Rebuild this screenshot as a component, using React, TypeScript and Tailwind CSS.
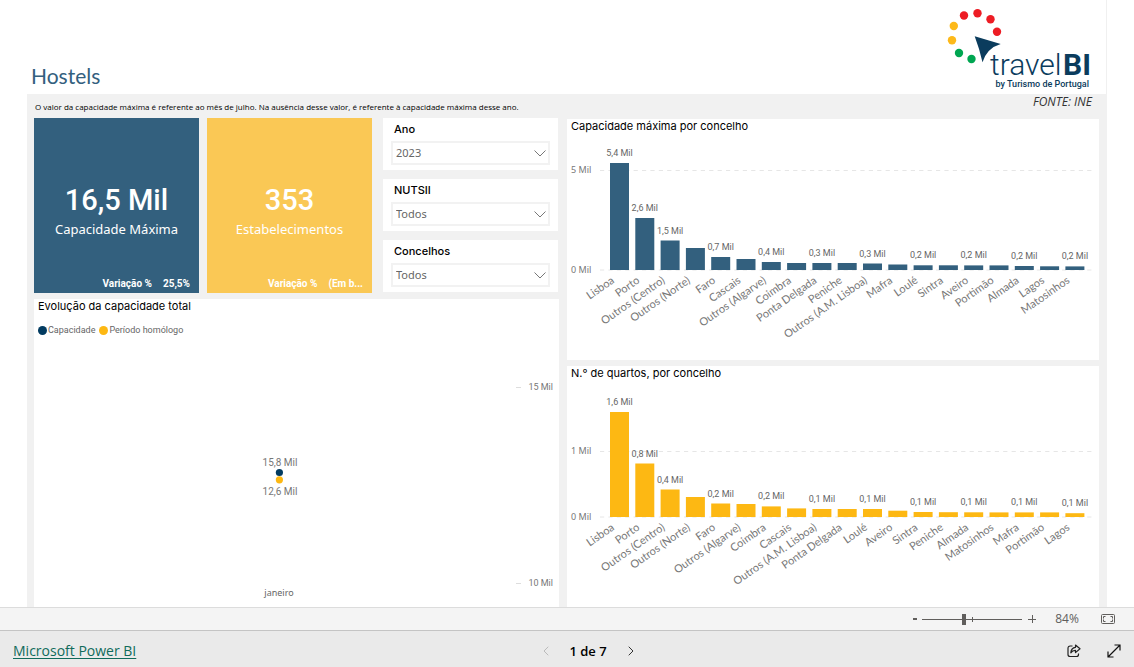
import { useState } from 'react';
import { ChevronLeft, ChevronRight } from 'lucide-react';

type Bar = { name: string; height: number; label?: string };

const capacity: Bar[] = [
  { name: 'Lisboa', height: 107, label: '5,4 Mil' },
  { name: 'Porto', height: 52, label: '2,6 Mil' },
  { name: 'Outros (Centro)', height: 29.5, label: '1,5 Mil' },
  { name: 'Outros (Norte)', height: 22 },
  { name: 'Faro', height: 13, label: '0,7 Mil' },
  { name: 'Cascais', height: 11 },
  { name: 'Outros (Algarve)', height: 8, label: '0,4 Mil' },
  { name: 'Coimbra', height: 7 },
  { name: 'Ponta Delgada', height: 7, label: '0,3 Mil' },
  { name: 'Peniche', height: 7 },
  { name: 'Outros (A.M. Lisboa)', height: 6.5, label: '0,3 Mil' },
  { name: 'Mafra', height: 5.5 },
  { name: 'Loulé', height: 4.7, label: '0,2 Mil' },
  { name: 'Sintra', height: 4.7 },
  { name: 'Aveiro', height: 4.6, label: '0,2 Mil' },
  { name: 'Portimão', height: 4.6 },
  { name: 'Almada', height: 4, label: '0,2 Mil' },
  { name: 'Lagos', height: 3.7 },
  { name: 'Matosinhos', height: 3.6, label: '0,2 Mil' },
];

const rooms: Bar[] = [
  { name: 'Lisboa', height: 105, label: '1,6 Mil' },
  { name: 'Porto', height: 53.5, label: '0,8 Mil' },
  { name: 'Outros (Centro)', height: 27.5, label: '0,4 Mil' },
  { name: 'Outros (Norte)', height: 20 },
  { name: 'Faro', height: 13.5, label: '0,2 Mil' },
  { name: 'Outros (Algarve)', height: 13 },
  { name: 'Coimbra', height: 10.6, label: '0,2 Mil' },
  { name: 'Cascais', height: 8.6 },
  { name: 'Outros (A.M. Lisboa)', height: 8, label: '0,1 Mil' },
  { name: 'Ponta Delgada', height: 8 },
  { name: 'Loulé', height: 8, label: '0,1 Mil' },
  { name: 'Aveiro', height: 6.3 },
  { name: 'Sintra', height: 5, label: '0,1 Mil' },
  { name: 'Peniche', height: 4.8 },
  { name: 'Almada', height: 4.7, label: '0,1 Mil' },
  { name: 'Matosinhos', height: 4.6 },
  { name: 'Mafra', height: 4.6, label: '0,1 Mil' },
  { name: 'Portimão', height: 4.6 },
  { name: 'Lagos', height: 3.8, label: '0,1 Mil' },
];

const BASE = 135;

function PanelTitle({ children }: { children: string }) {
  return <h2 className="h-4 px-1 font-['Inter',sans-serif] text-[11px] leading-[15px] font-normal text-black">{children}</h2>;
}

function BarPanel({ title, bars, color, tick, tickY }: { title: string; bars: Bar[]; color: string; tick: string; tickY: number }) {
  return (
    <section className="bg-white">
      <PanelTitle>{title}</PanelTitle>
      <svg viewBox="0 0 532 225" className="block h-auto w-full" role="img" aria-label={title}>
        <g stroke="#e6e6e6" strokeDasharray="4.2 4.2">
          <line x1="33" x2="527" y1={tickY + 0.5} y2={tickY + 0.5} />
          <line x1="33" x2="527" y1={BASE} y2={BASE} />
        </g>
        <g className="fill-[#777] font-['Noto_Sans',sans-serif] text-[9px]">
          <text x="4" y={tickY + 3}>{tick}</text>
          <text x="4" y={BASE + 3}>0 Mil</text>
        </g>
        {bars.map((bar, i) => {
          const x = 43 + i * 25.3;
          return (
            <g key={bar.name}>
              <rect x={x} y={BASE - bar.height} width="19" height={bar.height} fill={color} />
              {bar.label && (
                <text x={x + 9.5} y={BASE - bar.height - 7} textAnchor="middle" className="fill-[#666] font-['Roboto',sans-serif] text-[9px]">
                  {bar.label}
                </text>
              )}
              <text
                textAnchor="end"
                transform={`translate(${x + 5} ${BASE + 12}) rotate(-35)`}
                className="fill-[#777] font-['Lato',sans-serif] text-[11px]"
              >
                {bar.name}
              </text>
            </g>
          );
        })}
      </svg>
    </section>
  );
}

function Kpi({ value, label, change, tone }: { value: string; label: string; change: string; tone: string }) {
  return (
    <section className={`flex flex-col items-center pt-16 text-white ${tone}`}>
      <p className="font-['Roboto',sans-serif] text-[29px] leading-9 font-medium">{value}</p>
      <p className="font-['Noto_Sans',sans-serif] text-[13px] leading-[22px]">{label}</p>
      <p className="mt-auto flex gap-[11px] self-end pr-[9px] pb-[3px] font-['Roboto',sans-serif] text-[10px] leading-3 font-bold">
        <span>Variação %</span>
        <span>{change}</span>
      </p>
    </section>
  );
}

function Filter({ id, label, value }: { id: string; label: string; value: string }) {
  return (
    <div className="bg-white px-2 pt-1 pb-[5px]">
      <label htmlFor={id} className="block px-[3px] font-['Inter',sans-serif] text-[11px] leading-[15px] font-medium text-black">
        {label}
      </label>
      <div className="relative mt-1">
        <select
          id={id}
          defaultValue={value}
          className="block h-6 w-full appearance-none border-2 border-[#f2f2f2] bg-white pr-6 pl-[3px] font-['Noto_Sans',sans-serif] text-[11px] leading-4 text-[#666]"
        >
          <option>{value}</option>
        </select>
        <svg viewBox="0 0 12 7" className="pointer-events-none absolute top-[9px] right-1 h-[7px] w-3" fill="none" stroke="#777" aria-hidden="true">
          <path d="M.5.5 6 6 11.5.5" />
        </svg>
      </div>
    </div>
  );
}

function Logo() {
  const dots = [
    [964, 15.5, '#ed1c24'],
    [977.5, 13.3, '#ed1c24'],
    [990.5, 19.3, '#ed1c24'],
    [997, 31.8, '#ed1c24'],
    [953.8, 26, '#fdb91a'],
    [952, 40.3, '#fdb91a'],
    [959, 53, '#00a651'],
    [971.5, 59, '#00a651'],
  ] as const;
  return (
    <svg viewBox="944 4 150 88" className="h-[88px] w-[150px]" role="img" aria-label="travelBI by Turismo de Portugal">
      {dots.map(([x, y, fill]) => (
        <circle key={`${x}`} cx={x} cy={y} r="4.2" fill={fill} />
      ))}
      <path d="M974.7 36.3 1000.7 44Q987 48 982.5 62.2Q979.500 49 974.700 36.300Z" fill="#0b3c5d" />
      <text x="990" y="75" className="fill-[#0b3c5d] font-['Roboto',sans-serif] text-[30px] font-light">travel</text>
      <text x="1091" y="75" textAnchor="end" className="fill-[#0b3c5d] font-['Roboto',sans-serif] text-[30px] font-bold">BI</text>
      <text x="1089" y="87" textAnchor="end" className="fill-[#0b3c5d] font-['Roboto',sans-serif] text-[9px] font-medium">by Turismo de Portugal</text>
    </svg>
  );
}

export default function App() {
  const [zoom, setZoom] = useState(42);
  return (
    <div className="flex h-screen flex-col bg-white font-['Open_Sans',sans-serif]">
      <main className="flex min-h-0 flex-1 flex-col overflow-hidden px-[27px]">
        <header className="flex h-[94px] shrink-0 items-end justify-between border-r border-[#f0f0f0] pr-3 pl-1">
          <h1 className="pb-1 font-['Lato',sans-serif] text-[21px] leading-7 font-normal text-[#33607e]">Hostels</h1>
          <div className="pb-[2px]">
            <Logo />
          </div>
        </header>

        <div className="flex-1 bg-[#f1f1f1] pr-2 pl-[7px]">
          <div className="flex h-6 justify-between pr-[7px]">
            <p className="pt-[5px] pl-px font-['Open_Sans',sans-serif] text-[8px] leading-4 text-black">
              O valor da capacidade máxima é referente ao mês de julho. Na ausência desse valor, é referente à capacidade máxima desse ano.
            </p>
            <p className="font-['Open_Sans',sans-serif] text-[12px] leading-4 text-[#333] italic">FONTE: INE</p>
          </div>

          <div className="grid grid-cols-[525fr_532fr] gap-2">
            <div className="flex flex-col gap-[6px]">
              <div className="grid h-[175px] grid-cols-[165fr_165fr_179fr] gap-x-2">
                <Kpi value="16,5 Mil" label="Capacidade Máxima" change="25,5%" tone="bg-[#33607e]" />
                <Kpi value="353" label="Estabelecimentos" change="(Em b..." tone="bg-[#fac855]" />
                <div className="flex flex-col gap-[9px] pr-px pl-[3px]">
                  <Filter id="ano" label="Ano" value="2023" />
                  <Filter id="nuts" label="NUTSII" value="Todos" />
                  <Filter id="concelhos" label="Concelhos" value="Todos" />
                </div>
              </div>

              <section className="flex-1 bg-white">
                <PanelTitle>Evolução da capacidade total</PanelTitle>
                <ul className="mt-[7px] mb-px flex h-4 items-center gap-1 pl-1 font-['Roboto',sans-serif] text-[9px] leading-4 text-[#666]">
                  <li className="flex items-center gap-px"><span className="size-[9px] rounded-full bg-[#023b60]" />Capacidade</li>
                  <li className="flex items-center gap-px"><span className="size-[9px] rounded-full bg-[#fdb813]" />Período homólogo</li>
                </ul>
                <svg viewBox="0 0 525 268" className="block h-auto w-full" role="img" aria-label="Evolução da capacidade total">
                  <path d="M482 48.500h5M482 244.500h5" stroke="#ddd" />
                  <g className="fill-[#777] font-['Roboto',sans-serif] text-[9px]">
                    <text x="519" y="51" textAnchor="end">15 Mil</text>
                    <text x="519" y="247" textAnchor="end">10 Mil</text>
                  </g>
                  <g className="fill-[#777] font-['Roboto',sans-serif] text-[10px]">
                    <text x="246" y="127" textAnchor="middle">15,8 Mil</text>
                    <text x="246" y="156" textAnchor="middle">12,6 Mil</text>
                  </g>
                  <text x="245" y="257" textAnchor="middle" className="fill-[#666] font-['Noto_Sans',sans-serif] text-[9px]">janeiro</text>
                  <circle cx="245.400" cy="133.500" r="3.600" fill="#023b60" />
                  <circle cx="245.400" cy="140.800" r="3.600" fill="#fdb813" />
                </svg>
              </section>
            </div>

            <div className="flex flex-col gap-[6px] pt-px">
              <BarPanel title="Capacidade máxima por concelho" bars={capacity} color="#33607e" tick="5 Mil" tickY={35} />
              <BarPanel title="N.° de quartos, por concelho" bars={rooms} color="#fdb813" tick="1 Mil" tickY={69} />
            </div>
          </div>
        </div>
      </main>

      <div className="flex h-[23px] shrink-0 items-center justify-end border-t border-[#dcdcdc] bg-[#f4f4f4] pr-[19px] text-[#605e5c]">
        <button type="button" aria-label="Reduzir" className="flex h-4 w-3 items-center justify-center">
          <span className="h-[2px] w-1 bg-[#605e5c]" />
        </button>
        <div className="relative mx-px flex h-4 w-[100px] items-center">
          <span className="absolute left-[50px] h-[5px] w-px bg-[#605e5c]" />
          <input
            type="range"
            aria-label="Zoom"
            min={0}
            max={100}
            value={zoom}
            onChange={(e) => setZoom(Number(e.target.value))}
            className="m-0 h-3 w-full appearance-none bg-transparent [&::-webkit-slider-runnable-track]:h-px [&::-webkit-slider-runnable-track]:bg-[#605e5c] [&::-webkit-slider-thumb]:-mt-[5px] [&::-webkit-slider-thumb]:h-[11px] [&::-webkit-slider-thumb]:w-1 [&::-webkit-slider-thumb]:appearance-none [&::-webkit-slider-thumb]:bg-[#605e5c]"
          />
        </div>
        <button type="button" aria-label="Ampliar" className="ml-[3px] flex h-4 w-3 items-center justify-center">
          <svg viewBox="0 0 8 8" className="size-2" stroke="#605e5c" aria-hidden="true"><path d="M0 4.500h8M4.500 0v8" /></svg>
        </button>
        <span className="ml-[13px] w-8 text-center text-[12px] leading-4">84%</span>
        <button type="button" aria-label="Ajustar à página" className="ml-[18px]">
          <svg viewBox="0 0 14 10" className="block h-[10px] w-[14px]" fill="none" stroke="#605e5c" aria-hidden="true">
            <rect x=".5" y=".5" width="13" height="9" rx="1" />
            <path d="M2.500 4.500v-2h2M2.500 5.500v2h2M11.500 4.500v-2h-2M11.500 5.500v2h-2" />
          </svg>
        </button>
      </div>

      <footer className="grid h-[37px] shrink-0 grid-cols-[1fr_auto_1fr] items-center border-t border-[#c4c4c4] bg-[#eaeaea] pt-[3px] pr-[13px] pl-[13px]">
        <a href="#powerbi" className="justify-self-start text-[14px] leading-5 text-[#106b5b] underline underline-offset-2">Microsoft Power BI</a>
        <nav aria-label="Páginas" className="ml-[42px] flex items-center">
          <button type="button" disabled aria-label="Página anterior" className="text-[#bbb]"><ChevronLeft size={16} strokeWidth={1.5} /></button>
          <span className="w-[69px] text-center text-[13px] leading-5 font-semibold text-black">1 de 7</span>
          <button type="button" aria-label="Página seguinte" className="text-[#333]"><ChevronRight size={16} strokeWidth={1.5} /></button>
        </nav>
        <div className="flex items-center gap-[26px] justify-self-end">
          <button type="button" aria-label="Partilhar">
            <svg viewBox="0 0 14 14" className="block size-[14px]" fill="none" stroke="#222" strokeWidth="1.200" strokeLinejoin="round" aria-hidden="true">
              <path d="M5.500 2H3.200Q1 2 1 4.200v6.300q0 2 2.200 2h6.300q2 0 2-2V9.500" />
              <path d="M8.500 1 13 4.800 8.500 8.600V6.300Q5.500 6.200 3.800 8.800 4.200 3.800 8.500 3.300Z" />
            </svg>
          </button>
          <button type="button" aria-label="Ecrã inteiro">
            <svg viewBox="0 0 14 14" className="block size-[14px]" fill="none" stroke="#111" strokeWidth="1.200" aria-hidden="true">
              <path d="M1 13 13 1M7.500 1H13v5.500M1 7.500V13h5.500" />
            </svg>
          </button>
        </div>
      </footer>
    </div>
  );
}
